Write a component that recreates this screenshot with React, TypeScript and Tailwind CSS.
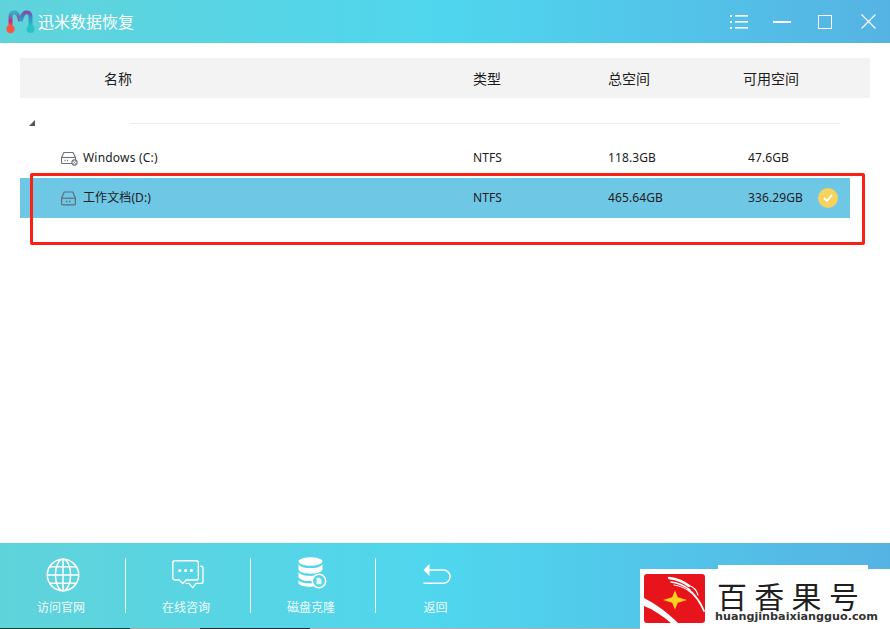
import React from "react";

function DriveC() {
  return (
    <svg width="17" height="15" viewBox="0 0 17 15" fill="none" stroke="#6b7378" strokeWidth="1.1">
      <path d="M3 1.5h9l2.5 5v5a1 1 0 0 1-1 1H1.5a1 1 0 0 1-1-1v-5z" />
      <path d="M.7 6.5h13.6" />
      <path d="M3.5 9.5h1M6 9.5h1" strokeWidth="1.3" />
      <circle cx="13.5" cy="11.5" r="2.6" fill="#fff" />
      <path d="M12.3 10.3l2.4 2.4M14.7 10.3l-2.4 2.4" strokeWidth=".8" />
    </svg>
  );
}

function DriveD() {
  return (
    <svg width="15" height="15" viewBox="0 0 15 15" fill="none" stroke="#5d6f7a" strokeWidth="1.2">
      <path d="M3.2 1h8.6l2.6 6.2v5.6a1 1 0 0 1-1 1H1.6a1 1 0 0 1-1-1V7.2z" />
      <path d="M.8 7.2h13.4" />
      <path d="M5 10.5h1.4M8 10.5h1.4" strokeWidth="1.3" />
    </svg>
  );
}

function Globe() {
  return (
    <svg width="34" height="34" viewBox="0 0 34 34" fill="none" stroke="#fff" strokeWidth="1.5">
      <circle cx="17" cy="17" r="15.7" />
      <ellipse cx="17" cy="17" rx="7.6" ry="15.7" />
      <path d="M17 1.3v31.4M1.3 17h31.4M4 8.8h26M4 25.2h26" />
    </svg>
  );
}

function Chat() {
  return (
    <svg width="32" height="29" viewBox="0 0 33 30" fill="none" stroke="#fff" strokeWidth="1.4" strokeLinejoin="round">
      <path d="M3 .8h22a2.2 2.2 0 0 1 2.2 2.2v15.5a2.2 2.2 0 0 1-2.2 2.2H14.5l-3.5 3.6-3.5-3.6H3A2.2 2.2 0 0 1 .8 18.500V3A2.2 2.2 0 0 1 3 .8z" />
      <path d="M29.2 6.500h1a1.800 1.800 0 0 1 1.800 1.800v13.900a2 2 0 0 1-2 2h-5.200l-3.300 4.600-4-4.600h-3.600" />
      <circle cx="8" cy="10.800" r="1.600" fill="#fff" stroke="none" />
      <circle cx="14" cy="10.800" r="1.600" fill="#fff" stroke="none" />
      <circle cx="20" cy="10.800" r="1.600" fill="#fff" stroke="none" />
    </svg>
  );
}

function Disks() {
  return (
    <svg width="29" height="32" viewBox="0 0 29 32" fill="none">
      <ellipse cx="12.500" cy="4.500" rx="12" ry="4.200" fill="#fff" />
      <path d="M.5 7.200c2 3 6.500 3.900 12 3.900s10-.9 12-3.900v5.600c-2 3-6.500 3.900-12 3.900s-10-.9-12-3.900z" fill="#fff" />
      <path d="M.5 15c2 3 6.500 3.900 12 3.900 1.500 0 3-.1 4.300-.3-1.500 1.500-2.300 3.300-2.400 5.400-.6.100-1.200.100-1.900.100-5.500 0-10-1.100-12-3.900z" fill="#fff" />
      <path d="M.5 23c2 2.800 6.500 3.400 12 3.400.9 0 1.700 0 2.500-.1.400 1.100 1 2.100 1.800 3-1.400.3-2.800.4-4.300.4-5.500 0-12-1.300-12-3.700z" fill="#fff" />
      <circle cx="21" cy="24" r="6.700" stroke="#fff" strokeWidth="1.600" />
      <path d="M18.500 20.800h3.200l1.900 1.900v4.500h-5.100z" fill="#fff" opacity=".85" />
    </svg>
  );
}

function Back() {
  return (
    <svg width="28" height="22" viewBox="0 0 28 22" fill="none">
      <path d="M.5 7l6-6.300v12.300z" fill="#fff" />
      <path d="M6 7h14.500a6.600 6.600 0 0 1 0 13.200H.5" stroke="#fff" strokeWidth="1.500" />
    </svg>
  );
}

function RedLogo() {
  return (
    <svg width="61" height="49" viewBox="0 0 61 49" className="shrink-0">
      <path d="M3 0h55a3 3 0 0 1 3 3v43a3 3 0 0 1-3 3H34C24 39 12 30 0 24V3a3 3 0 0 1 3-3z" fill="#e8141c" />
      <path d="M0 32c10 4 19 10 27 17H3a3 3 0 0 1-3-3z" fill="#e8141c" />
      <path d="M31 16.500l2.800 6.800 9.200 2.700-9.200 2.700-2.800 6.800-2.800-6.800-9.200-2.700 9.200-2.700z" fill="#ffd21e" />
      <g fill="none" stroke="#fff" strokeLinecap="round">
        <path d="M25 4c8 1 15 4 20 8" strokeWidth="2.400" />
        <path d="M27 8c7 1 14 4 19 8" strokeWidth="1.300" />
        <path d="M30 11c6 1 12 3 17 8" strokeWidth="1" />
        <path d="M44 11c6 2 9 6 10 10" strokeWidth="1.200" />
        <path d="M44 15c6 5 12 12 16 22" strokeWidth="1.800" />
      </g>
    </svg>
  );
}

export default function App() {
  return (
    <div
      className="relative flex h-[629px] w-[890px] flex-col overflow-hidden bg-white text-[12px] tracking-[0.1px] text-[#1c1c1c]"
      style={{ fontFamily: '"Noto Sans","Noto Sans CJK SC",sans-serif' }}
    >
      {/* title bar */}
      <div className="flex h-[43px] shrink-0 items-center bg-gradient-to-r from-[#60d3da] via-[#4fd6ee] to-[#55b3e3] pl-[6px]">
        <svg width="29" height="24" viewBox="0 0 29 24" fill="none" className="mr-[3px] mt-[1px]">
          <defs>
            <linearGradient id="lg1" x1="0" y1="0" x2="0" y2="1">
              <stop offset="0" stopColor="#2fb3c9" />
              <stop offset=".55" stopColor="#c0288c" />
              <stop offset="1" stopColor="#ff6a2b" />
            </linearGradient>
            <linearGradient id="lg2" x1="0" y1="0" x2="0" y2="1">
              <stop offset="0" stopColor="#7d4fa8" />
              <stop offset=".4" stopColor="#2f98c4" />
              <stop offset="1" stopColor="#2bc4c6" />
            </linearGradient>
          </defs>
          <path d="M4.500 18V7c0-4 2-5 5-4.500 3 1 4 6 5 8.500" stroke="url(#lg1)" strokeWidth="4" />
          <path d="M14.500 11c1-2.500 2-7.500 5-8.500 3-.5 5 .5 5 4.500v11" stroke="url(#lg2)" strokeWidth="4" />
          <circle cx="4.500" cy="19" r="4.200" fill="#f9583f" />
          <circle cx="24.500" cy="19" r="4" fill="#2bc4c6" />
        </svg>
        <span className="text-[16px] leading-none tracking-normal text-white">迅米数据恢复</span>
        <div className="ml-auto flex items-center">
          <svg width="18" height="16" viewBox="0 0 18 16" className="mr-[25px]" fill="#fff">
            <rect x="0" y="1" width="2" height="2" />
            <rect x="0" y="7" width="2" height="2" />
            <rect x="0" y="13" width="2" height="2" />
            <rect x="5" y="1" width="13" height="1.600" />
            <rect x="5" y="7" width="13" height="1.600" />
            <rect x="5" y="13" width="13" height="1.600" />
          </svg>
          <span className="mr-[27px] h-[2px] w-[18px] bg-white" />
          <span className="mr-[29px] h-[14px] w-[14px] border border-white" />
          <svg width="15" height="15" viewBox="0 0 15 15" className="mr-[14px]" stroke="#fff" strokeWidth="1.100">
            <path d="M.5.500l14 14M14.500.500l-14 14" />
          </svg>
        </div>
      </div>

      {/* table */}
      <div className="flex-1 px-[20px] pt-[15px]">
        <div className="grid h-[40px] w-[850px] grid-cols-[84px_369px_135px_135px_1fr] items-center bg-[#f3f3f3] text-[14px] tracking-normal">
          <span />
          <span>名称</span>
          <span>类型</span>
          <span>总空间</span>
          <span>可用空间</span>
        </div>

        <div className="flex h-[46px] items-start pl-[9px] pr-[30px]">
          <span className="mt-[22px] h-0 w-0 border-b-[6px] border-l-[6px] border-b-[#555] border-l-transparent" />
          <span className="ml-[95px] mt-[25px] h-px flex-1 bg-[#ececec]" />
        </div>

        <div className="grid h-[28px] w-[830px] grid-cols-[41px_22px_390px_135px_1fr] items-center">
          <span />
          <DriveC />
          <span className="tracking-[0.2px]">Windows (C:)</span>
          <span>NTFS</span>
          <div className="flex">
            <span className="w-[140px]">118.3GB</span>
            <span>47.6GB</span>
          </div>
        </div>

        <div className="mt-[6px] grid h-[40px] w-[830px] grid-cols-[41px_22px_390px_135px_140px_70px_1fr] items-center bg-[#6fc7e6]">
          <span />
          <DriveD />
          <span>工作文档(D:)</span>
          <span>NTFS</span>
          <span>465.64GB</span>
          <span>336.29GB</span>
          <span className="flex h-[20px] w-[20px] items-center justify-center rounded-full bg-[#f6d35f]">
            <svg width="10" height="8" viewBox="0 0 10 8" fill="none" stroke="#fff" strokeWidth="1.800">
              <path d="M1 4l3 2.800L9 1" />
            </svg>
          </span>
        </div>
      </div>

      {/* footer */}
      <div className="flex h-[85px] shrink-0 items-start bg-gradient-to-r from-[#60d3da] via-[#4fd6ee] to-[#55b3e3]">
        <div className="relative flex w-[125px] flex-col items-center pt-[15px]">
          <Globe />
          <span className="mt-[8px] pr-[3px] text-[12px] leading-[16px] tracking-normal text-white/95">访问官网</span>
          <span className="absolute -right-px top-[15px] h-[55px] w-px bg-white/90" />
        </div>
        <div className="relative flex w-[125px] flex-col items-center pt-[17px]">
          <Chat />
          <span className="mt-[11px] pr-[3px] text-[12px] leading-[16px] tracking-normal text-white/95">在线咨询</span>
          <span className="absolute -right-px top-[15px] h-[55px] w-px bg-white/90" />
        </div>
        <div className="relative flex w-[125px] flex-col items-center pt-[14px]">
          <Disks />
          <span className="mt-[11px] pr-[3px] text-[12px] leading-[16px] tracking-normal text-white/95">磁盘克隆</span>
          <span className="absolute -right-px top-[15px] h-[55px] w-px bg-white/90" />
        </div>
        <div className="flex w-[124px] flex-col items-center pt-[20px]">
          <Back />
          <span className="mt-[15px] pr-[3px] text-[12px] leading-[16px] tracking-normal text-white/95">返回</span>
        </div>
      </div>
      <div className="flex h-px shrink-0">
        <span className="w-[130px] bg-[#14403c]" />
        <span className="w-[70px] bg-[#a9a6a0]" />
        <span className="w-[110px] bg-[#2a2a2a]" />
        <span className="flex-1 bg-[#b5b0a8]" />
      </div>

      {/* annotation */}
      <div className="pointer-events-none absolute left-[30px] top-[173px] h-[72px] w-[835px] rounded-[2px] border-[3px] border-[#fb1f14]" />

      {/* watermark */}
      <div className="absolute left-[718px] top-[565px] h-[6px] w-[150px] bg-white" />
      <div className="absolute left-[640px] top-[569px] flex h-[60px] w-[250px] bg-white pl-[4px] pt-[5px]">
        <RedLogo />
        <div className="ml-[11px] flex flex-col">
          <span
            className="ml-[1px] mt-[5px] h-[32px] whitespace-nowrap text-[30px] leading-[32px] tracking-[7.300px] text-[#1f1f1f]"
            style={{ fontFamily: '"Noto Sans CJK SC",sans-serif' }}
          >
            百香果号
          </span>
          <span
            className="h-[12px] -ml-px whitespace-nowrap text-[11.200px] font-bold leading-[12px] tracking-normal text-[#333]"
            style={{ fontFamily: '"DejaVu Sans",sans-serif' }}
          >
            huangjinbaixiangguo.com
          </span>
        </div>
      </div>
    </div>
  );
}
